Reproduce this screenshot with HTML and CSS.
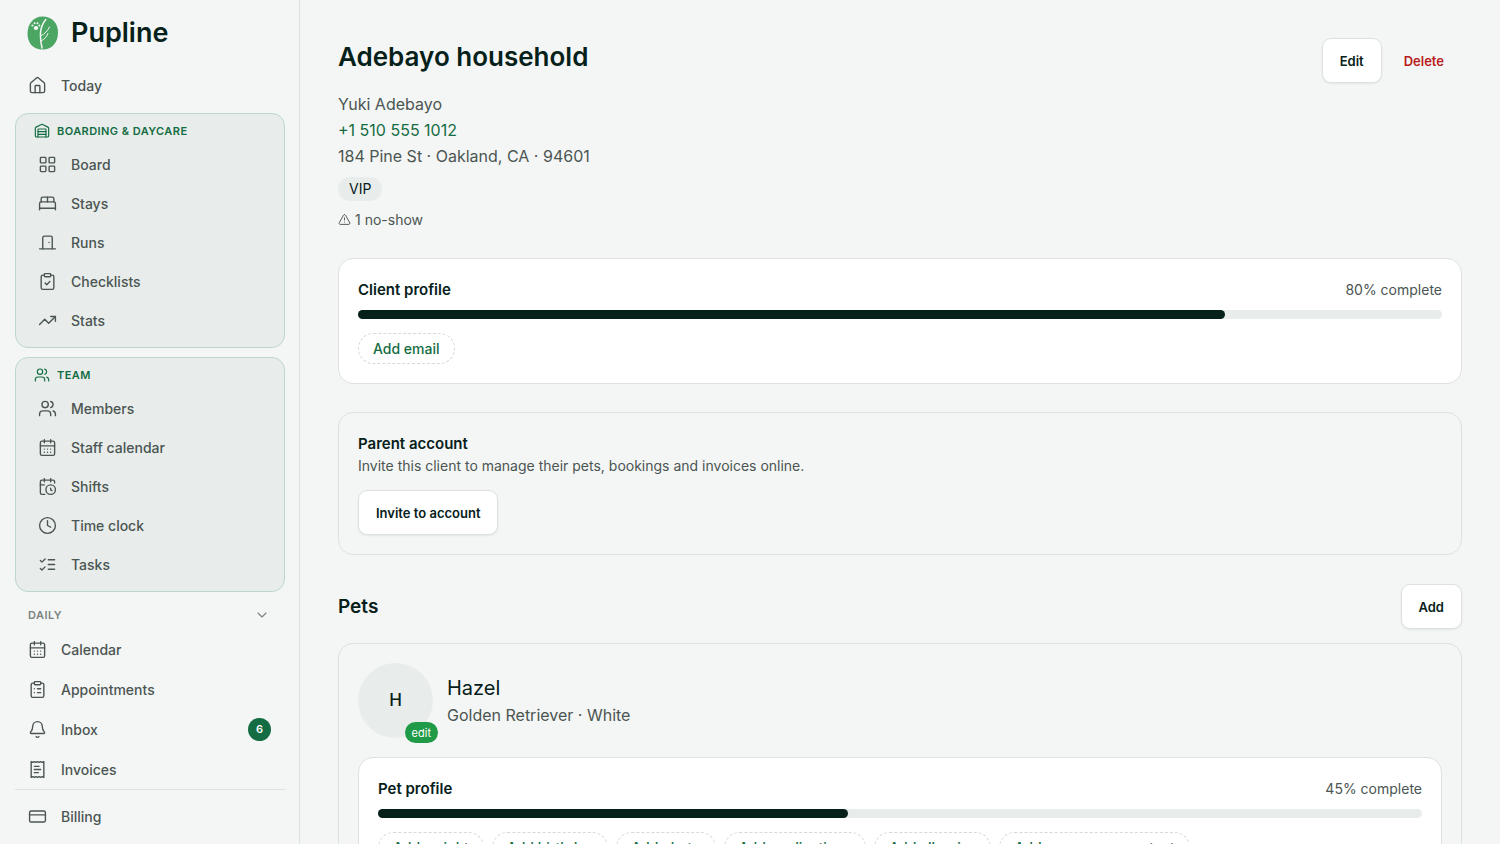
FILE: index.html
```html
<!DOCTYPE html>
<html lang="en">

<head>
  <meta charset="UTF-8">
  <meta name="viewport" content="width=device-width, initial-scale=1.0">
  <link rel="stylesheet" href="styles.css">
  <title>Adebayo household - Pupline</title>
</head>

<body>
  <div class="app">
    <aside class="sidebar">
      <a class="brand" href="#">
        <svg class="logo" viewBox="0 0 32 34" aria-hidden="true">
          <path class="leaf" d="M15.500 .5C25 .5 31 7 31 16.500S25.500 33.500 15.500 33.500 .5 26.500 .5 17.500 6 .5 15.500 .5z" />
          <path class="stem" d="M18.800 3.500C15 8 13.600 12.500 13.400 18c-.1 5 .6 9.500 1.600 14" />
          <path class="vein" d="M13.800 19.800c4-1.800 6.700-4.800 8.700-8.800M14 25c3.500-1.600 5.500-4 7-7.500" />
          <ellipse cx="9" cy="12" rx="2.300" ry="2" />
          <circle cx="5.400" cy="9.400" r="1" />
          <circle cx="7.600" cy="7.200" r="1" />
          <circle cx="10.500" cy="7.200" r="1" />
          <circle cx="12.300" cy="9.600" r="1" />
        </svg>
        <span>Pupline</span>
      </a>

      <nav class="nav">
        <a class="item" href="#">
          <svg class="icon" viewBox="0 0 24 24"><path d="M15 21v-8a1 1 0 0 0-1-1h-4a1 1 0 0 0-1 1v8" /><path d="M3 10a2 2 0 0 1 .709-1.528l7-5.999a2 2 0 0 1 2.582 0l7 5.999A2 2 0 0 1 21 10v9a2 2 0 0 1-2 2H5a2 2 0 0 1-2-2z" /></svg>
          Today
        </a>

        <div class="group">
          <div class="group-title">
            <svg class="icon" viewBox="0 0 24 24"><path d="M18 21V10a1 1 0 0 0-1-1H7a1 1 0 0 0-1 1v11" /><path d="M22 19a2 2 0 0 1-2 2H4a2 2 0 0 1-2-2V8a2 2 0 0 1 1.132-1.803l7.950-3.974a2 2 0 0 1 1.837 0l7.948 3.974A2 2 0 0 1 22 8z" /><path d="M6 13h12M6 17h12" /></svg>
            Boarding &amp; Daycare
          </div>
          <a class="item" href="#">
            <svg class="icon" viewBox="0 0 24 24"><rect width="7" height="7" x="3" y="3" rx="1" /><rect width="7" height="7" x="14" y="3" rx="1" /><rect width="7" height="7" x="14" y="14" rx="1" /><rect width="7" height="7" x="3" y="14" rx="1" /></svg>
            Board
          </a>
          <a class="item" href="#">
            <svg class="icon" viewBox="0 0 24 24"><path d="M2 20v-8a2 2 0 0 1 2-2h16a2 2 0 0 1 2 2v8" /><path d="M4 10V6a2 2 0 0 1 2-2h12a2 2 0 0 1 2 2v4" /><path d="M12 4v6M2 18h20" /></svg>
            Stays
          </a>
          <a class="item" href="#">
            <svg class="icon" viewBox="0 0 24 24"><path d="M18 20V6a2 2 0 0 0-2-2H8a2 2 0 0 0-2 2v14" /><path d="M2 20h20M14 12v.01" /></svg>
            Runs
          </a>
          <a class="item" href="#">
            <svg class="icon" viewBox="0 0 24 24"><rect width="8" height="4" x="8" y="2" rx="1" /><path d="M16 4h2a2 2 0 0 1 2 2v14a2 2 0 0 1-2 2H6a2 2 0 0 1-2-2V6a2 2 0 0 1 2-2h2" /><path d="m9 14 2 2 4-4" /></svg>
            Checklists
          </a>
          <a class="item" href="#">
            <svg class="icon" viewBox="0 0 24 24"><path d="M16 7h6v6" /><path d="m22 7-8.500 8.500-5-5L2 17" /></svg>
            Stats
          </a>
        </div>

        <div class="group">
          <div class="group-title">
            <svg class="icon" viewBox="0 0 24 24"><path d="M16 21v-2a4 4 0 0 0-4-4H6a4 4 0 0 0-4 4v2" /><path d="M16 3.128a4 4 0 0 1 0 7.744M22 21v-2a4 4 0 0 0-3-3.870" /><circle cx="9" cy="7" r="4" /></svg>
            Team
          </div>
          <a class="item" href="#">
            <svg class="icon" viewBox="0 0 24 24"><path d="M16 21v-2a4 4 0 0 0-4-4H6a4 4 0 0 0-4 4v2" /><path d="M16 3.128a4 4 0 0 1 0 7.744M22 21v-2a4 4 0 0 0-3-3.870" /><circle cx="9" cy="7" r="4" /></svg>
            Members
          </a>
          <a class="item" href="#">
            <svg class="icon" viewBox="0 0 24 24"><path d="M8 2v4M16 2v4M3 10h18" /><rect width="18" height="18" x="3" y="4" rx="2" /><path d="M8 14h.01M12 14h.01M16 14h.01M8 18h.01M12 18h.01M16 18h.01" /></svg>
            Staff calendar
          </a>
          <a class="item" href="#">
            <svg class="icon" viewBox="0 0 24 24"><path d="M16 14v2.200l1.600 1M16 2v4M8 2v4M3 10h5" /><path d="M21 7.500V6a2 2 0 0 0-2-2H5a2 2 0 0 0-2 2v14a2 2 0 0 0 2 2h3.500" /><circle cx="16" cy="16" r="6" /></svg>
            Shifts
          </a>
          <a class="item" href="#">
            <svg class="icon" viewBox="0 0 24 24"><circle cx="12" cy="12" r="10" /><path d="M12 6v6l4 2" /></svg>
            Time clock
          </a>
          <a class="item" href="#">
            <svg class="icon" viewBox="0 0 24 24"><path d="m3 17 2 2 4-4M3 7l2 2 4-4M13 6h8M13 12h8M13 18h8" /></svg>
            Tasks
          </a>
        </div>

        <section class="daily">
          <button class="daily-title" type="button">
            Daily
            <svg class="icon" viewBox="0 0 24 24"><path d="m6 9 6 6 6-6" /></svg>
          </button>
          <a class="item" href="#">
            <svg class="icon" viewBox="0 0 24 24"><path d="M8 2v4M16 2v4M3 10h18" /><rect width="18" height="18" x="3" y="4" rx="2" /><path d="M8 14h.01M12 14h.01M16 14h.01M8 18h.01M12 18h.01M16 18h.01" /></svg>
            Calendar
          </a>
          <a class="item" href="#">
            <svg class="icon" viewBox="0 0 24 24"><rect width="8" height="4" x="8" y="2" rx="1" /><path d="M16 4h2a2 2 0 0 1 2 2v14a2 2 0 0 1-2 2H6a2 2 0 0 1-2-2V6a2 2 0 0 1 2-2h2" /><path d="M12 11h4M12 16h4M8 11h.01M8 16h.01" /></svg>
            Appointments
          </a>
          <a class="item" href="#">
            <svg class="icon" viewBox="0 0 24 24"><path d="M10.268 21a2 2 0 0 0 3.464 0" /><path d="M3.262 15.326A1 1 0 0 0 4 17h16a1 1 0 0 0 .740-1.673C19.410 13.956 18 12.499 18 8A6 6 0 0 0 6 8c0 4.499-1.411 5.956-2.738 7.326" /></svg>
            Inbox
            <span class="count">6</span>
          </a>
          <a class="item" href="#">
            <svg class="icon" viewBox="0 0 24 24"><path d="M4 2v20l2-1 2 1 2-1 2 1 2-1 2 1 2-1 2 1V2l-2 1-2-1-2 1-2-1-2 1-2-1-2 1Z" /><path d="M14 8H8M16 12H8M13 16H8" /></svg>
            Invoices
          </a>
        </section>
      </nav>

      <div class="sidebar-footer">
        <a class="item" href="#">
          <svg class="icon" viewBox="0 0 24 24"><rect width="20" height="14" x="2" y="5" rx="2" /><path d="M2 10h20" /></svg>
          Billing
        </a>
      </div>
    </aside>

    <main class="main">
      <header class="page-header">
        <div class="client">
          <h1>Adebayo household</h1>
          <p>Yuki Adebayo</p>
          <p><a href="tel:+15105551012">+1 510 555 1012</a></p>
          <p>184 Pine St · Oakland, CA · 94601</p>
          <span class="tag">VIP</span>
          <div class="no-show">
            <svg class="icon" viewBox="0 0 24 24"><path d="m21.730 18-8-14a2 2 0 0 0-3.480 0l-8 14A2 2 0 0 0 4 21h16a2 2 0 0 0 1.730-3M12 9v4M12 17h.01" /></svg>
            1 no-show
          </div>
        </div>
        <div class="actions">
          <button class="btn" type="button">Edit</button>
          <button class="btn btn-delete" type="button">Delete</button>
        </div>
      </header>

      <section class="card card-white">
        <div class="card-head">
          <h3>Client profile</h3>
          <span>80% complete</span>
        </div>
        <div class="progress"><div class="progress-bar" style="width: 80%"></div></div>
        <div class="chips">
          <button class="chip" type="button">Add email</button>
        </div>
      </section>

      <section class="card">
        <h3>Parent account</h3>
        <p class="desc">Invite this client to manage their pets, bookings and invoices online.</p>
        <button class="btn" type="button">Invite to account</button>
      </section>

      <section class="pets">
        <div class="pets-head">
          <h2>Pets</h2>
          <button class="btn" type="button">Add</button>
        </div>
        <article class="card">
          <div class="pet">
            <div class="avatar">
              H
              <button class="avatar-edit" type="button">edit</button>
            </div>
            <div>
              <a class="pet-name" href="#">Hazel</a>
              <p>Golden Retriever · White</p>
            </div>
          </div>
          <div class="card card-white">
            <div class="card-head">
              <h3>Pet profile</h3>
              <span>45% complete</span>
            </div>
            <div class="progress"><div class="progress-bar" style="width: 45%"></div></div>
            <div class="chips">
              <button class="chip" type="button">Add weight</button>
              <button class="chip" type="button">Add birthday</button>
              <button class="chip" type="button">Add photo</button>
              <button class="chip" type="button">Add medications</button>
              <button class="chip" type="button">Add allergies</button>
              <button class="chip" type="button">Add emergency contact</button>
            </div>
          </div>
        </article>
      </section>
    </main>
  </div>
</body>

</html>
```
FILE: styles.css
```css
:root {
  --bg: #f4f6f5;
  --soft: #e8edeb;
  --line: #dde1df;
  --ink: #06201a;
  --muted: #4b5552;
  --green: #146c43;
  --sidebar-width: 300px;
}

* {
  box-sizing: border-box;
}

body {
  margin: 0;
  background-color: var(--bg);
  color: var(--ink);
  font-family: Inter, "Liberation Sans", sans-serif;
  font-size: 15px;
}

h1,
h2,
h3,
p {
  margin: 0;
}

h1,
h2,
h3 {
  font-weight: 600;
}

a {
  text-decoration: none;
}

button {
  font-family: inherit;
  cursor: pointer;
}

.icon {
  width: 19px;
  height: 19px;
  flex-shrink: 0;
  fill: none;
  stroke: currentColor;
  stroke-width: 1.75;
  stroke-linecap: round;
  stroke-linejoin: round;
}

.app {
  display: flex;
  height: 100vh;
}

/* sidebar */
.sidebar {
  width: var(--sidebar-width);
  flex-shrink: 0;
  display: flex;
  flex-direction: column;
  padding: 0 14px 0 15px;
  border-right: 1px solid var(--line);
}

.brand {
  height: 65px;
  flex-shrink: 0;
  display: flex;
  align-items: center;
  gap: 12px;
  padding-left: 12px;
  color: var(--ink);
  font-size: 27px;
  font-weight: 600;
}

.logo {
  width: 32px;
  height: 34px;
  fill: #f4f6f5;
}

.logo .leaf {
  fill: #4ba563;
}

.logo .stem,
.logo .vein {
  fill: none;
  stroke: #f4f6f5;
  stroke-width: 1.5;
  stroke-linecap: round;
}

.logo .vein {
  stroke-width: 1;
}

.nav {
  flex: 1;
  min-height: 0;
  overflow: hidden;
  display: flex;
  flex-direction: column;
  gap: 9px;
  padding-top: 2px;
}

.item {
  height: 40px;
  flex-shrink: 0;
  display: flex;
  align-items: center;
  gap: 14px;
  padding: 0 14px 0 13px;
  color: var(--muted);
  font-size: 14px;
  font-weight: 500;
}

.nav > .item {
  height: 37px;
}

.group {
  flex-shrink: 0;
  padding: 2px 9px 7px;
  background-color: var(--soft);
  border: 1px solid #bcd6cb;
  border-radius: 13px;
}

.group .item {
  height: 39px;
}

.group-title {
  height: 29px;
  display: flex;
  align-items: center;
  gap: 7px;
  padding-left: 9px;
  color: var(--green);
  font-size: 11px;
  font-weight: 600;
  letter-spacing: 0.04em;
  text-transform: uppercase;
}

.group-title .icon {
  width: 16px;
  height: 16px;
}

.daily {
  flex-shrink: 0;
  display: flex;
  flex-direction: column;
}

.daily-title {
  height: 28px;
  display: flex;
  justify-content: space-between;
  align-items: center;
  padding: 0 15px 0 13px;
  border: 0;
  background: none;
  color: #7b8481;
  font-size: 11px;
  font-weight: 600;
  letter-spacing: 0.04em;
  text-transform: uppercase;
}

.daily-title .icon {
  width: 16px;
  height: 16px;
}

.count {
  width: 23px;
  height: 23px;
  margin-left: auto;
  border-radius: 50%;
  background-color: var(--green);
  color: #fff;
  font-size: 11px;
  font-weight: 600;
  line-height: 23px;
  text-align: center;
}

.sidebar-footer {
  flex-shrink: 0;
  padding: 6px 0 8px;
  border-top: 1px solid var(--line);
}

/* main */
.main {
  flex: 1;
  min-width: 0;
  padding: 38px;
  overflow: hidden;
}

.main p {
  color: var(--muted);
  font-size: 16px;
  line-height: 26px;
}

.page-header {
  display: flex;
  justify-content: space-between;
  align-items: flex-start;
}

h1 {
  margin-bottom: 15px;
  font-size: 26px;
  line-height: 38px;
}

h2 {
  font-size: 19px;
  line-height: 28px;
}

h3 {
  font-size: 15px;
  line-height: 23px;
}

.client a {
  color: var(--green);
}

.tag {
  display: inline-block;
  margin-top: 8px;
  padding: 0 11px;
  border-radius: 12px;
  background-color: var(--soft);
  font-size: 14px;
  line-height: 24px;
}

.no-show {
  display: flex;
  align-items: center;
  gap: 4px;
  margin-top: 8px;
  color: var(--muted);
  font-size: 14px;
  line-height: 21px;
}

.no-show .icon {
  width: 13px;
  height: 13px;
}

.actions {
  display: flex;
  gap: 4px;
}

.btn {
  height: 45px;
  padding: 0 17px;
  border: 1px solid var(--line);
  border-radius: 9px;
  background-color: #fff;
  box-shadow: 0 1px 2px rgba(6, 32, 26, 0.08);
  color: var(--ink);
  font-size: 13px;
  font-weight: 600;
}

.btn-delete {
  border-color: transparent;
  background: none;
  box-shadow: none;
  color: #b91c1c;
}

.card {
  margin-top: 28px;
  padding: 19px;
  border: 1px solid var(--line);
  border-radius: 15px;
}

.card-white {
  background-color: #fff;
}

.card-head {
  display: flex;
  justify-content: space-between;
  align-items: baseline;
}

.card-head span {
  color: var(--muted);
  font-size: 14px;
}

.progress {
  height: 9px;
  margin: 9px 0 14px;
  border-radius: 5px;
  background-color: var(--soft);
}

.progress-bar {
  height: 100%;
  border-radius: 5px;
  background-color: var(--ink);
}

.chips {
  display: flex;
  flex-wrap: wrap;
  gap: 8px;
}

.chip {
  height: 31px;
  padding: 0 14px;
  border: 1px dashed #d5dad8;
  border-radius: 16px;
  background: none;
  color: var(--green);
  font-size: 14px;
  font-weight: 500;
}

.main .desc {
  margin-bottom: 13px;
  font-size: 14px;
  line-height: 22px;
}

.pets-head {
  display: flex;
  justify-content: space-between;
  align-items: center;
  margin-top: 29px;
}

.pets .card {
  margin-top: 14px;
}

.pet {
  display: flex;
  align-items: center;
  gap: 14px;
}

.avatar {
  position: relative;
  width: 75px;
  height: 75px;
  border-radius: 50%;
  background-color: var(--soft);
  font-size: 17px;
  font-weight: 500;
  line-height: 75px;
  text-align: center;
}

/* sits over the lower right edge of the avatar */
.avatar-edit {
  position: absolute;
  right: -5px;
  bottom: -5px;
  height: 21px;
  padding: 0 7px;
  border: 0;
  border-radius: 11px;
  background-color: #1f9a46;
  color: #fff;
  font-size: 11px;
}

.pet-name {
  color: var(--ink);
  font-size: 20px;
  line-height: 28px;
}

.pets .pet + .card {
  margin-top: 19px;
}
```
